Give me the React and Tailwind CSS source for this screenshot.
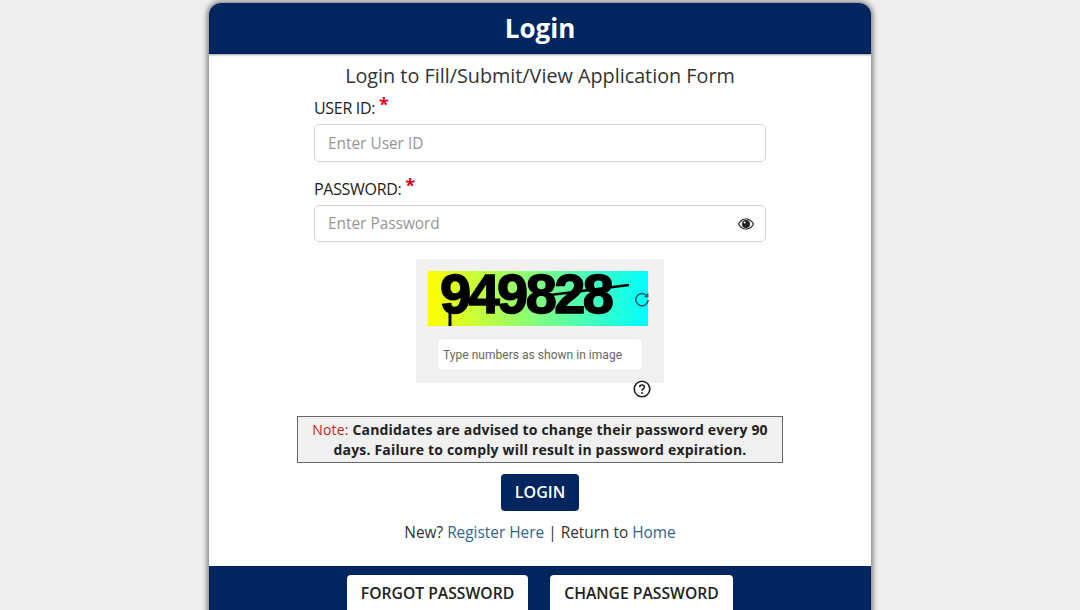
import React from "react";

function Eye() {
  return (
    <svg width="16" height="12" viewBox="0 0 16 12" className="block">
      <path d="M0.5 6C2.3 2.6 5 1 8 1s5.7 1.6 7.5 5c-1.8 3.4-4.5 5-7.5 5S2.3 9.4 0.5 6z" fill="#fff" stroke="#222" strokeWidth="1.2" />
      <circle cx="8" cy="6" r="4" fill="#222" />
      <circle cx="6.6" cy="4.4" r="1" fill="#fff" />
    </svg>
  );
}

function Refresh() {
  return (
    <svg width="16" height="16" viewBox="0 0 16 16" fill="none" stroke="#0b5566" strokeWidth="1.5" className="block">
      <path d="M13.2 5.2A6.2 6.2 0 1 0 14.2 9" />
      <path d="M13.8 2.2v3.4h-3.4" strokeWidth="1.2" />
    </svg>
  );
}

function Help() {
  return (
    <svg width="18" height="18" viewBox="0 0 18 18" fill="none" className="block">
      <circle cx="9" cy="9" r="7.8" stroke="#222" strokeWidth="1.6" />
      <path d="M6.6 7.1C6.7 5.7 7.7 5 9 5c1.4 0 2.4.8 2.4 2 0 1.9-2.4 1.8-2.4 3.8" stroke="#222" strokeWidth="1.6" />
      <circle cx="9" cy="13" r="1" fill="#222" />
    </svg>
  );
}

export default function App() {
  return (
    <div className="h-[610px] overflow-hidden bg-[#eeeeee] pt-[3px] font-['Open_Sans','Noto_Sans',sans-serif]">
      <div className="mx-auto w-[662px] overflow-hidden rounded-t-[12px] bg-white shadow-[0_0_5px_2px_rgba(0,0,0,0.45)]">
        <div className="flex h-[51px] items-center justify-center border-b border-[#00205a] bg-[#01265f] text-[26px] font-bold text-white shadow-[0_1px_2px_rgba(0,0,0,0.4)]">
          Login
        </div>
        <div className="flex h-[512px] flex-col items-center">
          <h1 className="mt-[8px] h-[28px] text-[19.8px] leading-[28px] font-normal text-[#333333]">
            Login to Fill/Submit/View Application Form
          </h1>
          <div className="w-[452px]">
            <label className="block h-[34px] pt-[1px] text-[16px] leading-[34px] tracking-[-0.3px] text-[#222222]">
              USER ID: <span className="align-[3px] text-[18px] leading-none font-bold text-[#d0021b]">*</span>
            </label>
            <div className="flex h-[38px] items-center rounded-[5px] border border-[#d4d4d4] px-[13px] pt-[1px] text-[15.4px] text-[#969696]">
              Enter User ID
            </div>
            <label className="mt-[10px] block h-[33px] pt-[1px] text-[16px] leading-[33px] tracking-[-0.3px] text-[#222222]">
              PASSWORD: <span className="align-[3px] text-[18px] leading-none font-bold text-[#d0021b]">*</span>
            </label>
            <div className="flex h-[37px] items-center justify-between rounded-[5px] border border-[#d4d4d4] pr-[11px] pl-[13px] text-[15.4px] text-[#969696]">
              <span>Enter Password</span>
              <Eye />
            </div>
          </div>

          <div className="relative mt-[17px] flex h-[124px] w-[248px] flex-col rounded-[3px] bg-[#f1f1f1] pt-[12px] pl-[12px]">
            <div className="relative h-[55px] w-[220px] bg-[linear-gradient(90deg,#ffff00,#00ffff)]">
              <span className="absolute top-[-5px] left-[12px] font-['Liberation_Sans',sans-serif] text-[56px] leading-[55px] font-bold tracking-[-2.6px] text-black [-webkit-text-stroke:1.5px_black]">
                949828
              </span>
              <svg width="220" height="55" viewBox="0 0 220 55" className="absolute top-0 left-0" fill="none" stroke="#000">
                <path d="M122 24L201 14" strokeWidth="2.5" />
                <path d="M22 32L22 55" strokeWidth="3" />
              </svg>
            </div>
            <div className="absolute top-[32px] left-[218px]">
              <Refresh />
            </div>
            <div className="mt-[12px] ml-[9px] flex h-[33px] w-[206px] items-center rounded-[4px] border border-[#e8e8e8] bg-white pl-[5px] font-['Roboto',sans-serif] text-[12px] tracking-[0.03px] text-[#666666]">
              Type numbers as shown in image
            </div>
            <div className="absolute top-[121px] left-[217px]">
              <Help />
            </div>
          </div>

          <div className="mt-[33px] h-[47px] w-[486px] border border-[#666666] bg-[#f0f0f0] px-[8px] pt-[3px] text-center text-[14px] leading-[20px] font-bold tracking-[0.18px] text-[#222222]">
            <span className="font-normal text-[#c81e1e]">Note: </span>
            Candidates are advised to change their password every 90 days. Failure to comply will result in password expiration.
          </div>

          <button className="mt-[11px] h-[37px] w-[78px] rounded-[4px] bg-[#01265f] pb-[1px] text-[16px] font-semibold text-white">
            LOGIN
          </button>

          <p className="mt-[11px] text-[15.4px] leading-[22px] text-[#333333]">
            New? <a className="text-[#2f6690]">Register Here</a> | Return to <a className="text-[#2f6690]">Home</a>
          </p>
        </div>
        <div className="flex h-[60px] justify-center gap-[22px] bg-[#01265f] pt-[9px]">
          <button className="h-[51px] w-[181px] rounded-[4px] bg-white pb-[13px] text-[15.7px] font-semibold text-[#222222]">
            FORGOT PASSWORD
          </button>
          <button className="h-[51px] w-[183px] rounded-[4px] bg-white pb-[13px] text-[15.7px] font-semibold text-[#222222]">
            CHANGE PASSWORD
          </button>
        </div>
      </div>
    </div>
  );
}
